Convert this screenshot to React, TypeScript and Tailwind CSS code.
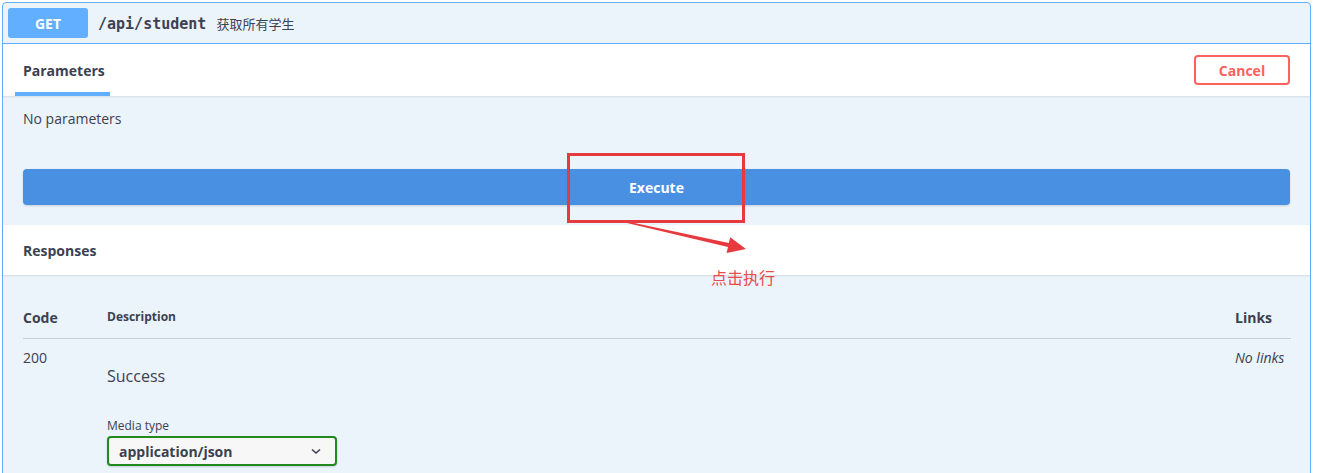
export default function App() {
  return (
    <div className="relative h-[473px] bg-white pl-[2px] pt-[2px] text-[#3b4151] font-['Open_Sans','Noto_Sans_CJK_SC',sans-serif] overflow-hidden">
      <div className="w-[1309px] h-[480px] border border-[#61affe] rounded-[4px] bg-[#ebf3fb]">
        {/* summary header */}
        <div className="flex items-center h-[41px] px-[5px] border-b border-[#61affe]">
          <div className="w-[80px] h-[30px] rounded-[3px] bg-[#61affe] text-white font-bold text-[14px] flex items-center justify-center">
            GET
          </div>
          <div className="ml-[10px] pt-[3px] font-['DejaVu_Sans_Mono',monospace] text-[15px] font-bold text-[#3b4151]">
            /api/student
          </div>
          <div className="ml-[10px] pt-[2px] text-[13px] text-[#3b4151] font-['Noto_Sans_CJK_SC',sans-serif]">
            获取所有学生
          </div>
        </div>

        {/* parameters header */}
        <div className="h-[52px] bg-white shadow-[0_1px_2px_rgba(0,0,0,0.1)] flex items-stretch justify-between pl-[12px] pr-[20px]">
          <div className="flex flex-col w-[95px]">
            <div className="flex-1 flex items-center px-[8px] pt-[4px] font-bold text-[14px]">Parameters</div>
            <div className="h-[4px] bg-[#61affe]" />
          </div>
          <button className="self-center w-[96px] h-[30px] border-2 border-[#ff6060] rounded-[4px] text-[#ff6060] font-bold text-[14px] bg-white">
            Cancel
          </button>
        </div>

        {/* body */}
        <div className="px-[20px] pt-[14px] pb-[20px]">
          <div className="text-[14px] leading-[18px]">No parameters</div>
          <button className="mt-[41px] w-[1267px] h-[36px] rounded-[4px] bg-[#4990e2] text-white font-bold text-[14px] shadow-[0_1px_2px_rgba(0,0,0,0.15)]">
            Execute
          </button>
        </div>

        {/* responses header */}
        <div className="h-[50px] bg-white shadow-[0_1px_2px_rgba(0,0,0,0.1)] flex items-center px-[20px] font-bold text-[14px]">
          Responses
        </div>

        {/* table */}
        <div className="pl-[20px] pr-[19px] pt-[30px]">
          <div className="flex items-center h-[24px] mb-[9px]">
            <div className="w-[84px] font-bold text-[14px]">Code</div>
            <div className="flex-1 font-bold text-[12px]">Description</div>
            <div className="w-[56px] font-bold text-[14px]">Links</div>
          </div>
          <div className="h-px bg-[rgba(59,65,81,0.2)]" />
          <div className="flex">
            <div className="w-[84px] pt-[10px] text-[14px] leading-[18px]">200</div>
            <div className="flex-1 pt-[27px]">
              <div className="text-[16px] leading-[20px]">Success</div>
              <div className="mt-[32px] text-[12px] leading-[16px]">Media type</div>
              <div className="mt-[2px] w-[230px] h-[30px] border-2 border-[#1f8a1f] rounded-[4px] bg-[#f7f7f7] flex items-center justify-between pl-[10px] pr-[14px] shadow-[0_1px_2px_rgba(0,0,0,0.15)]">
                <span className="font-bold text-[14px]">application/json</span>
                <svg width="10" height="7" viewBox="0 0 10 7">
                  <polyline points="1,1.5 5,5 9,1.5" fill="none" stroke="#3b4151" strokeWidth="1.6" />
                </svg>
              </div>
            </div>
            <div className="w-[56px] pt-[10px] text-[14px] leading-[18px] italic whitespace-nowrap">No links</div>
          </div>
        </div>
      </div>

      {/* annotations */}
      <div className="absolute left-[567px] top-[153px] w-[178px] h-[70px] border-[3px] border-[#e73a3f]" />
      <svg className="absolute left-0 top-0" width="1331" height="473" style={{ pointerEvents: "none" }}>
        <polygon
          points="626,221.3 728.8,243.1 730.2,237.3 746,249 726.6,252.9 728,247 626,222.8"
          fill="#e73a3f"
        />
      </svg>
      <div className="absolute left-[711px] top-[268px] text-[16px] leading-[18px] text-[#e84b4b] font-['Noto_Sans_CJK_SC',sans-serif]">
        点击执行
      </div>
    </div>
  );
}
